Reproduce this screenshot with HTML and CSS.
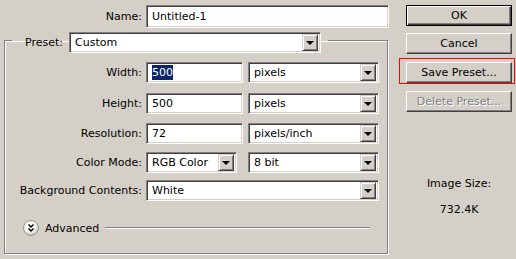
FILE: index.html
```html
<!DOCTYPE html>
<html lang="en">
<head>
    <meta charset="UTF-8">
    <title>New</title>
    <link rel="stylesheet" href="styles.css">
</head>
<body>
    <div class="dialog">
        <div class="main">
            <div class="row name-row">
                <label class="lbl name-lbl">Name:</label>
                <div class="field name-field">Untitled-1</div>
            </div>

            <fieldset class="group">
                <legend class="preset">
                    <span class="preset-lbl">Preset:</span>
                    <div class="select preset-select"><span class="val">Custom</span><span class="arrow"></span></div>
                </legend>

                <div class="row row-width">
                    <label class="lbl">Width:</label>
                    <div class="field num"><span class="selected">500</span></div>
                    <div class="select unit"><span class="val">pixels</span><span class="arrow"></span></div>
                </div>
                <div class="row row-height">
                    <label class="lbl">Height:</label>
                    <div class="field num">500</div>
                    <div class="select unit"><span class="val">pixels</span><span class="arrow"></span></div>
                </div>
                <div class="row row-res">
                    <label class="lbl">Resolution:</label>
                    <div class="field num">72</div>
                    <div class="select unit"><span class="val">pixels/inch</span><span class="arrow"></span></div>
                </div>
                <div class="row row-mode">
                    <label class="lbl">Color Mode:</label>
                    <div class="select mode"><span class="val">RGB Color</span><span class="arrow"></span></div>
                    <div class="select unit"><span class="val">8 bit</span><span class="arrow"></span></div>
                </div>
                <div class="row row-bg">
                    <label class="lbl">Background Contents:</label>
                    <div class="select wide"><span class="val">White</span><span class="arrow"></span></div>
                </div>

                <div class="advanced">
                    <svg class="adv-icon" width="16" height="16" viewBox="0 0 16 16">
                        <defs>
                            <radialGradient id="knob" cx="40%" cy="35%" r="70%">
                                <stop offset="0" stop-color="#ffffff"/>
                                <stop offset="0.6" stop-color="#f2f1ee"/>
                                <stop offset="1" stop-color="#b9b6ae"/>
                            </radialGradient>
                        </defs>
                        <circle cx="8" cy="8" r="7.5" fill="url(#knob)" stroke="#9a968e"/>
                        <path d="M5.5 4.5L8 7L10.5 4.5M5.5 8.5L8 11L10.5 8.5" fill="none" stroke="#000" stroke-width="1.4"/>
                    </svg>
                    <span class="adv-text">Advanced</span>
                    <span class="rule"></span>
                </div>
            </fieldset>
        </div>

        <div class="side">
            <button class="btn default">OK</button>
            <button class="btn cancel">Cancel</button>
            <div class="marked"><button class="btn">Save Preset...</button></div>
            <button class="btn delete" disabled>Delete Preset...</button>
            <div class="image-size">
                <div>Image Size:</div>
                <div class="size-value">732.4K</div>
            </div>
        </div>
    </div>
</body>
</html>
```

FILE: styles.css
```css
:root {
    --face: #d4d0c8;
    --shadow: #808080;
    --dark: #404040;
    --light: #ffffff;
}

body {
    margin: 0;
    background-color: var(--face);
    font-family: "DejaVu Sans", "Liberation Sans", sans-serif;
    font-size: 11px;
    color: #000;
}

.dialog {
    display: flex;
    width: 516px;
    height: 259px;
}

.main {
    width: 390px;
    padding-top: 5px;
}

.row {
    display: flex;
    align-items: center;
    height: 21px;
}

.row-width { margin-bottom: 10px; }
.row-height { margin-bottom: 9px; }
.row-res { margin-bottom: 8px; }
.row-mode { margin-bottom: 7px; }

.lbl {
    width: 130px;
    margin-right: 4px;
    text-align: right;
    white-space: nowrap;
}

.name-row {
    height: 23px;
}

.name-lbl {
    width: 142px;
}

/* sunken white box */
.field,
.select {
    box-sizing: border-box;
    height: 21px;
    background: #fff;
    border: 1px solid;
    border-color: var(--shadow) var(--light) var(--light) var(--shadow);
    box-shadow: inset 1px 1px 0 var(--dark), inset -1px -1px 0 var(--face);
    display: flex;
    align-items: center;
    padding-left: 5px;
    white-space: nowrap;
}

.name-field {
    width: 243px;
    height: 23px;
}

.num {
    width: 97px;
}

.selected {
    background: #0a246a;
    color: #fff;
    padding: 1px 0;
}

.select {
    padding-right: 2px;
}

.select .val {
    flex: 1;
}

.arrow {
    box-sizing: border-box;
    width: 16px;
    height: 17px;
    border: 1px solid;
    border-color: var(--face) var(--dark) var(--dark) var(--face);
    box-shadow: inset 1px 1px 0 var(--light), inset -1px -1px 0 var(--shadow);
    background: var(--face);
    display: flex;
    align-items: center;
    justify-content: center;
}

.arrow::after {
    content: "";
    border-left: 4px solid transparent;
    border-right: 4px solid transparent;
    border-top: 4px solid #000;
    margin-top: 1px;
}

.unit {
    width: 131px;
    margin-left: 5px;
}

.mode {
    width: 91px;
    margin-right: 6px;
}

.mode + .unit {
    margin-left: 5px;
}

.wide {
    width: 233px;
}

/* etched group box */
.group {
    margin: -1px 2px 0 4px;
    padding: 9px 8px 17px 7px;
    border: 1px solid var(--shadow);
    box-shadow: 1px 1px 0 var(--light), inset 1px 1px 0 var(--light);
    min-width: 0;
}

.preset {
    display: flex;
    align-items: center;
    padding: 5px 7px 0 13px;
}

.preset-lbl {
    margin-right: 6px;
}

.preset-select {
    width: 252px;
}

.advanced {
    display: flex;
    align-items: center;
    height: 16px;
    margin-top: 19px;
    padding-left: 11px;
}

.adv-text {
    margin-left: 6px;
}

.rule {
    flex: 1;
    height: 1px;
    margin: 0 9px 0 6px;
    background: var(--shadow);
    border-bottom: 1px solid var(--light);
}

.side {
    width: 106px;
    margin-left: 16px;
    padding-top: 5px;
    display: flex;
    flex-direction: column;
}

.btn {
    box-sizing: border-box;
    width: 106px;
    height: 21px;
    padding: 0;
    font: inherit;
    color: #000;
    background: var(--face);
    border: 1px solid;
    border-color: var(--light) var(--dark) var(--dark) var(--light);
    box-shadow: inset -1px -1px 0 var(--shadow);
}

.btn.default {
    border-color: #000;
    box-shadow: inset 1px 1px 0 var(--light), inset -1px -1px 0 var(--dark), inset -2px -2px 0 var(--shadow);
}

.cancel {
    margin-top: 7px;
}

.marked {
    margin: 4px 0 0 -7px;
    width: 107px;
    padding: 3px 1px 0 6px;
    border: 1px solid #ff0000;
}

.delete {
    margin-top: 7px;
    color: var(--shadow);
    text-shadow: 1px 1px 0 var(--light);
}

.image-size {
    margin-top: 65px;
    text-align: center;
    line-height: 13px;
}

.size-value {
    margin-top: 13px;
}
```
